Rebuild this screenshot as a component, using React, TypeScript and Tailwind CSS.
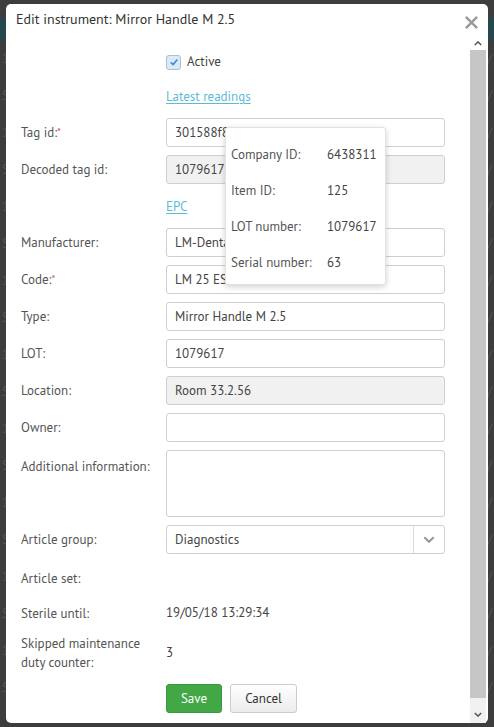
import React from "react";

type Field = {
  label: string;
  value?: string;
  required?: boolean;
  readOnly?: boolean;
};

const font = { fontFamily: '"PT Sans", Lato, "Noto Sans", sans-serif' };

const epcInfo = [
  ["Company ID:", "6438311"],
  ["Item ID:", "125"],
  ["LOT number:", "1079617"],
  ["Serial number:", "63"],
];

const lowerFields: Field[] = [
  { label: "Manufacturer:", value: "LM-Dental" },
  { label: "Code:", value: "LM 25 ES 2.5", required: true },
  { label: "Type:", value: "Mirror Handle M 2.5" },
  { label: "LOT:", value: "1079617" },
  { label: "Location:", value: "Room 33.2.56", readOnly: true },
  { label: "Owner:", value: "" },
];

const Label = ({ text, required }: { text: string; required?: boolean }) => (
  <div className="w-[145px] shrink-0 text-[13px] leading-[19px] text-[#555]">
    {text}
    {required && <span className="text-[#d9534f] align-top text-[11px]">*</span>}
  </div>
);

const Input = ({ value, readOnly }: { value?: string; readOnly?: boolean }) => (
  <div
    className={`flex h-[29px] w-[279px] items-center rounded-[3px] border border-[#cfcfcf] px-[8px] text-[13px] text-[#444] ${
      readOnly ? "bg-[#f1f1f1]" : "bg-white"
    }`}
  >
    {value}
  </div>
);

const Row = ({ f }: { f: Field }) => (
  <div className="flex items-center">
    <Label text={f.label} required={f.required} />
    <Input value={f.value} readOnly={f.readOnly} />
  </div>
);

const Chevron = ({ up, className }: { up?: boolean; className?: string }) => (
  <svg viewBox="0 0 10 6" className={className} fill="none" stroke="currentColor" strokeWidth="1.8">
    <path d={up ? "M1 5 L5 1 L9 5" : "M1 1 L5 5 L9 1"} />
  </svg>
);

const BackgroundPage = () => (
  <div className="flex h-[727px] flex-col bg-[#3d3d3d]">
    <div className="mt-[18px] h-[22px] bg-[#24484e]" />
    {Array.from({ length: 18 }).map((_, i) => (
      <div key={i} className="flex h-[37px] items-center justify-between px-[2px] text-[13px] text-[#555]">
        <span>{i % 2 ? "S" : "1"}</span>
        <span>V/</span>
      </div>
    ))}
  </div>
);

export default function App() {
  return (
    <div className="relative h-[727px] w-[494px] overflow-hidden" style={font}>
      <BackgroundPage />
      <div className="absolute inset-0 pl-[6px] pt-[4px]">
        <div className="flex h-[719px] w-[482px] flex-col rounded-[5px] bg-white">
          {/* header */}
          <div className="flex h-[33px] items-start justify-between pl-[10px] pr-[9px]">
            <div className="pt-[6px] text-[14px] leading-[18px] text-[#333]">
              Edit instrument: Mirror Handle M 2.5
            </div>
            <svg viewBox="0 0 16 16" className="mt-[11px] h-[15px] w-[15px] text-[#999]" stroke="currentColor" strokeWidth="2.6">
              <path d="M2 2 L14 14 M14 2 L2 14" />
            </svg>
          </div>

          <div className="flex flex-1">
            {/* body */}
            <div className="relative flex-1 pl-[15px]">
              <div className="flex flex-col">
                <div className="mt-[16px] flex h-[18px] items-center">
                  <div className="w-[145px]" />
                  <div className="flex h-[15px] w-[15px] items-center justify-center rounded-[3px] border border-[#a9c1d3] bg-[#dceaf5]">
                    <svg viewBox="0 0 12 12" className="h-[10px] w-[10px]" fill="none" stroke="#3d8fd1" strokeWidth="2">
                      <path d="M2 6.5 L5 9 L10 3" />
                    </svg>
                  </div>
                  <span className="ml-[6px] text-[13px] text-[#444]">Active</span>
                </div>

                <div className="mt-[16px] flex h-[20px] items-center">
                  <div className="w-[145px]" />
                  <span className="text-[13px] text-[#5bbcd8] underline underline-offset-2">Latest readings</span>
                </div>

                <div className="mt-[11px]">
                  <Row f={{ label: "Tag id:", value: "301588f8b4a62e5", required: true }} />
                </div>
                <div className="mt-[8px]">
                  <Row f={{ label: "Decoded tag id:", value: "1079617", readOnly: true }} />
                </div>

                <div className="mt-[13px] flex h-[20px] items-center">
                  <div className="w-[145px]" />
                  <span className="text-[13px] text-[#5bbcd8] underline underline-offset-2">EPC</span>
                </div>

                <div className="mt-[11px] flex flex-col gap-[8px]">
                  {lowerFields.map((f) => (
                    <Row key={f.label} f={f} />
                  ))}
                  <div className="flex items-start">
                    <div className="pt-[7px]">
                      <Label text="Additional information:" />
                    </div>
                    <div className="h-[67px] w-[279px] rounded-[3px] border border-[#cfcfcf] bg-white" />
                  </div>
                  <div className="flex items-center">
                    <Label text="Article group:" />
                    <div className="flex h-[29px] w-[279px] items-center rounded-[3px] border border-[#cfcfcf] bg-white text-[13px] text-[#444]">
                      <span className="flex-1 px-[8px]">Diagnostics</span>
                      <div className="flex h-full w-[31px] items-center justify-center border-l border-[#dcdcdc] text-[#999]">
                        <Chevron className="h-[7px] w-[12px]" />
                      </div>
                    </div>
                  </div>
                </div>

                <div className="mt-[14px] flex h-[20px] items-center">
                  <Label text="Article set:" />
                </div>
                <div className="mt-[15px] flex h-[20px] items-center">
                  <Label text="Sterile until:" />
                  <span className="text-[13px] text-[#444]">19/05/18 13:29:34</span>
                </div>
                <div className="mt-[11px] flex items-center">
                  <div className="w-[145px] shrink-0 text-[13px] leading-[19px] text-[#555]">
                    Skipped maintenance
                    <br />
                    duty counter:
                  </div>
                  <span className="text-[13px] text-[#444]">3</span>
                </div>

                <div className="mt-[12px] flex items-center gap-[8px]">
                  <div className="w-[137px]" />
                  <button className="h-[29px] w-[56px] rounded-[3px] border border-[#3a9a3f] bg-[#41a845] text-[13px] text-white">
                    Save
                  </button>
                  <button className="h-[29px] w-[67px] rounded-[3px] border border-[#cccccc] bg-gradient-to-b from-white to-[#ececec] text-[13px] text-[#333]">
                    Cancel
                  </button>
                </div>
              </div>

              {/* EPC popover */}
              <div className="absolute left-[219px] top-[90px] flex h-[158px] w-[161px] flex-col gap-[17px] rounded-[3px] border border-[#e2e2e2] bg-white px-[5px] pt-[17px] shadow-[0_2px_6px_rgba(0,0,0,0.18)]">
                {epcInfo.map(([k, v]) => (
                  <div key={k} className="flex h-[19px] items-center text-[13px]">
                    <span className="w-[96px] text-[#555]">{k}</span>
                    <span className="text-[#444]">{v}</span>
                  </div>
                ))}
              </div>
            </div>

            {/* scrollbar */}
            <div className="mr-[2px] flex w-[16px] flex-col bg-[#f1f1f1]">
              <div className="flex h-[13px] items-center justify-center bg-white text-[#555]">
                <Chevron up className="h-[5px] w-[8px]" />
              </div>
              <div className="flex-1 bg-[#c6c6c6]" />
              <div className="h-[8px]" />
              <div className="flex h-[17px] items-center justify-center text-[#555]">
                <Chevron className="h-[5px] w-[8px]" />
              </div>
            </div>
          </div>
        </div>
      </div>
    </div>
  );
}
